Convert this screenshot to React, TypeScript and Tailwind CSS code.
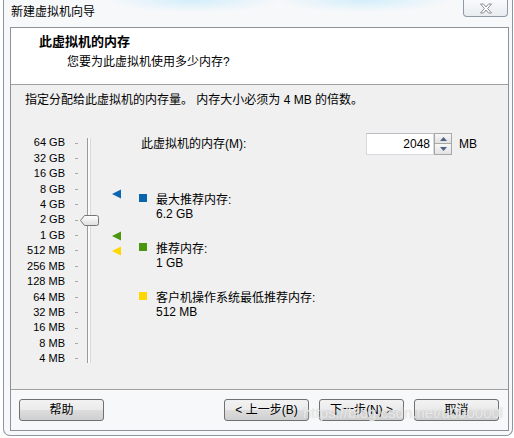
import React from 'react';

const FONT = '[font-family:"Liberation_Sans","Noto_Sans_CJK_SC",sans-serif]';

const sizes = ['64 GB', '32 GB', '16 GB', '8 GB', '4 GB', '2 GB', '1 GB', '512 MB', '256 MB', '128 MB', '64 MB', '32 MB', '16 MB', '8 MB', '4 MB'];

const legend = [
  { color: 'bg-[#0865ad]', label: '最大推荐内存:', value: '6.2 GB' },
  { color: 'bg-[#4a960f]', label: '推荐内存:', value: '1 GB' },
  { color: 'bg-[#fdd800]', label: '客户机操作系统最低推荐内存:', value: '512 MB' },
];

const Marker: React.FC<{ fill: string; top: string }> = ({ fill, top }) => (
  <svg className={`absolute left-[87px] ${top}`} width="10" height="10" viewBox="0 0 10 10">
    <polygon points="0,5 9,0.5 9,9.5" fill={fill} />
  </svg>
);

const Button: React.FC<{ children: React.ReactNode }> = ({ children }) => (
  <button className="w-[85px] h-[22px] rounded-[3px] border border-[#707070] bg-[linear-gradient(180deg,#f2f2f2_0%,#ebebeb_50%,#dddddd_51%,#cfcfcf_100%)] text-[12px] leading-[20px] text-black">
    {children}
  </button>
);

const App: React.FC = () => {
  return (
    <div className={`relative w-[514px] h-[438px] bg-white overflow-hidden text-black ${FONT}`}>
      {/* window frame */}
      <div className="ml-[3px] w-[510px] h-[436px] border border-t-0 border-[#8a96a3] rounded-b-[7px] bg-[#f6f8fa] bg-[radial-gradient(ellipse_85px_12px_at_190px_0px,#d3eefb,transparent),radial-gradient(ellipse_85px_12px_at_360px_0px,#d3eefb,transparent)] flex flex-col">
        {/* title bar */}
        <div className="h-[27px] flex items-start justify-between">
          <span className="pl-[7px] pt-[5px] text-[12px] leading-[14px]">新建虚拟机向导</span>
          <div className="mr-[4px] w-[45px] h-[17px] border border-t-0 border-[#8f9aa7] rounded-b-[4px] bg-[linear-gradient(180deg,#f9fafb,#e8ecf0)] flex items-center justify-center">
            <svg width="14" height="11" viewBox="0 0 14 11">
              <path d="M1.5 1 H4.5 L7 4 L9.5 1 H12.5 L8.6 5.5 L12.5 10 H9.5 L7 7 L4.5 10 H1.5 L5.4 5.5 Z" fill="#ffffff" stroke="#8a8f96" strokeWidth="1" strokeLinejoin="round" />
            </svg>
          </div>
        </div>

        {/* content panel */}
        <div className="ml-[6px] w-[499px] h-[404px] border border-[#8e9196] flex flex-col">
          {/* header */}
          <div className="h-[57px] bg-white border-b border-[#a0a0a0] pl-[28px] pt-[6px]">
            <div className="text-[13px] leading-[16px] font-bold">此虚拟机的内存</div>
            <div className="mt-[4px] ml-[28px] text-[12px] leading-[16px]">您要为此虚拟机使用多少内存?</div>
          </div>

          {/* body */}
          <div className="h-[305px] bg-[#f0f0f0] border-b border-[#a0a0a0] pl-[14px] pt-[7px]">
            <div className="text-[12px] leading-[16px]">指定分配给此虚拟机的内存量。 内存大小必须为 4 MB 的倍数。</div>

            <div className="mt-[25px] flex items-start">
              {/* slider */}
              <div className="relative w-[114px] flex items-start">
                <div className="mt-[2.3px] w-[40px] flex flex-col text-right text-[11px]">
                  {sizes.map(s => (
                    <div key={s} className="h-[15.43px] leading-[15.43px] whitespace-nowrap">{s}</div>
                  ))}
                </div>
                <div className="mt-[2.3px] ml-[10px] w-[3px] flex flex-col">
                  {sizes.map(s => (
                    <div key={s} className="h-[15.43px] flex items-center">
                      <div className="w-[3px] h-px bg-[#a8a8a8]" />
                    </div>
                  ))}
                </div>
                <div className="mt-[5px] ml-[9px] w-[4px] h-[225px] border-l border-[#9a9a9a] border-r border-r-[#d8d8d8] bg-[#fbfbfb]" />

                {/* thumb */}
                <svg className="absolute left-[55px] top-[82px]" width="19" height="11" viewBox="0 0 19 11">
                  <defs>
                    <linearGradient id="thumb" x1="0" y1="0" x2="0" y2="1">
                      <stop offset="0" stopColor="#ffffff" />
                      <stop offset="1" stopColor="#dedede" />
                    </linearGradient>
                  </defs>
                  <path d="M0.5 5.5 L4.5 0.5 H16.5 Q18.5 0.5 18.5 2.5 V8.5 Q18.5 10.5 16.5 10.5 H4.5 Z" fill="url(#thumb)" stroke="#767676" strokeWidth="1" />
                </svg>

                <Marker fill="#0a66b2" top="top-[56px]" />
                <Marker fill="#4a960f" top="top-[98px]" />
                <Marker fill="#ffd800" top="top-[113px]" />
              </div>

              {/* right column */}
              <div className="flex-1 flex flex-col">
                <div className="h-[22px] flex items-center">
                  <span className="pl-[2px] w-[227px] text-[12px] leading-[14px]">此虚拟机的内存(M):</span>
                  <div className="w-[68px] h-[22px] border border-[#d5d9de] border-t-[#b9bcc1] bg-white flex items-center justify-end pr-[3px] text-[12px]">
                    2048
                  </div>
                  <div className="w-[18px] h-[22px] flex flex-col">
                    <div className="h-[11px] border border-[#a8a8a8] bg-[linear-gradient(180deg,#f7f7f7,#e2e2e2)] flex items-center justify-center">
                      <svg width="7" height="4" viewBox="0 0 7 4"><polygon points="0,4 3.5,0 7,4" fill="#4d6185" /></svg>
                    </div>
                    <div className="h-[11px] border border-t-0 border-[#a8a8a8] bg-[linear-gradient(180deg,#f7f7f7,#e2e2e2)] flex items-center justify-center">
                      <svg width="7" height="4" viewBox="0 0 7 4"><polygon points="0,0 7,0 3.5,4" fill="#4d6185" /></svg>
                    </div>
                  </div>
                  <span className="ml-[7px] text-[12px]">MB</span>
                </div>

                <div className="mt-[38px] flex flex-col gap-[21px]">
                  {legend.map(l => (
                    <div key={l.label} className="flex items-start">
                      <div className={`mt-[1px] w-[8px] h-[8px] ${l.color}`} />
                      <div className="ml-[9px] text-[12px] leading-[14px]">
                        <div>{l.label}</div>
                        <div>{l.value}</div>
                      </div>
                    </div>
                  ))}
                </div>
              </div>
            </div>
          </div>

          {/* buttons */}
          <div className="flex-1 flex items-start pt-[9px] pl-[8px] pr-[9px]">
            <Button>帮助</Button>
            <div className="ml-auto flex gap-[10px]">
              <Button>&lt; 上一步(B)</Button>
              <Button>下一步(N) &gt;</Button>
              <Button>取消</Button>
            </div>
          </div>
        </div>
      </div>

      {/* watermark */}
      <div className="absolute left-[303px] top-[404px] text-[15px] leading-[18px] text-white/60 [text-shadow:0_0_1px_#c4c4c4] pointer-events-none whitespace-nowrap [font-family:'Liberation_Sans',sans-serif]">
        https://blog.csdn.net/u000000l
      </div>
    </div>
  );
};

export default App;
